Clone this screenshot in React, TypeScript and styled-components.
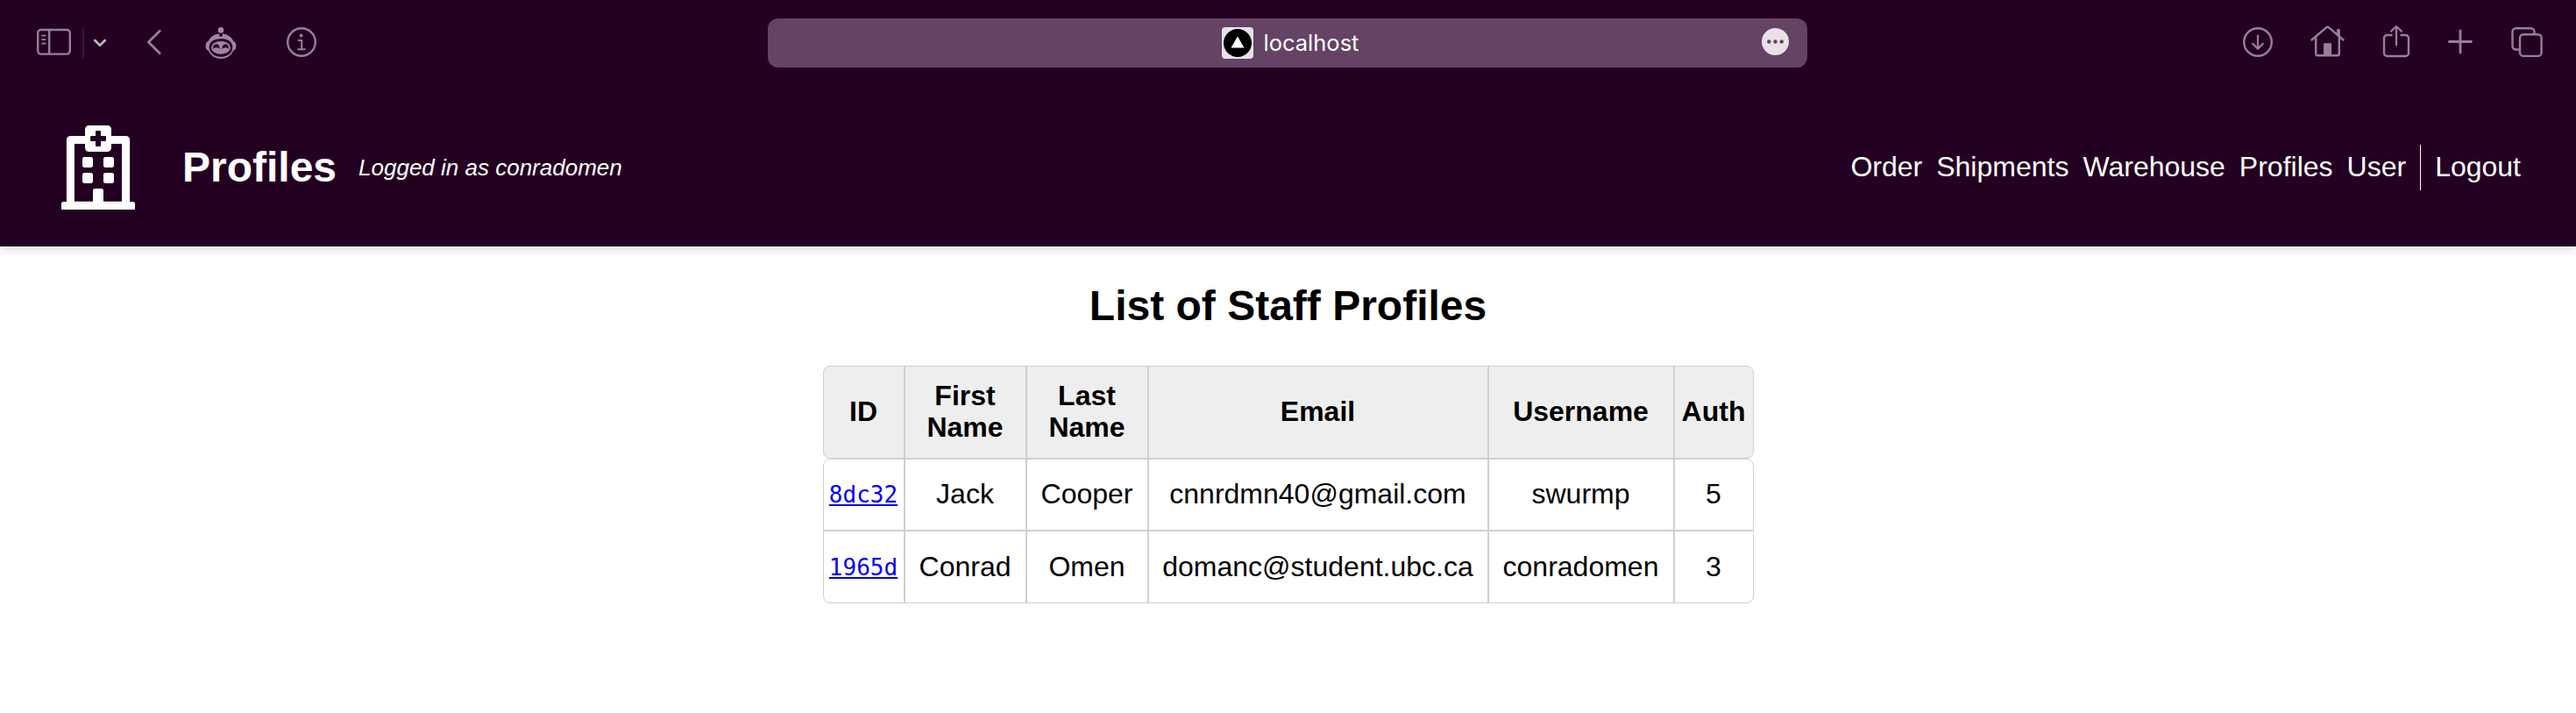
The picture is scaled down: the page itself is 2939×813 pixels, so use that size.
import React from "react";
import styled, { createGlobalStyle } from "styled-components";
import { FaRegHospital } from "react-icons/fa";

const GlobalStyle = createGlobalStyle`
  * { box-sizing: border-box; }
  body {
    margin: 0;
    background: #fff;
    color: #000;
    font-family: "Liberation Sans", Helvetica, Arial, sans-serif;
    font-size: 32px;
    line-height: 36px;
  }
`;

const Toolbar = styled.div`
  position: relative;
  z-index: 1;
  display: grid;
  grid-template-columns: 876px 1186px 1fr;
  align-items: center;
  height: 98px;
  background: #230022;
`;

const ToolGroup = styled.div<{ $end?: boolean }>`
  display: flex;
  align-items: center;
  justify-content: ${(p) => (p.$end ? "flex-end" : "flex-start")};
  padding: ${(p) => (p.$end ? "0 37px 0 0" : "0 0 0 42px")};
  color: #958095;
`;

const Glyph = styled.svg<{ $gap?: number }>`
  display: block;
  flex: none;
  height: 40px;
  margin-left: ${(p) => p.$gap ?? 0}px;
  fill: none;
  stroke: currentColor;
  stroke-width: 2.4;
  stroke-linecap: round;
  stroke-linejoin: round;
`;

const ToolDivider = styled.div`
  width: 2px;
  height: 36px;
  margin-left: 13px;
  background: #361836;
`;

const AddressBar = styled.div`
  display: grid;
  grid-template-columns: 1fr auto 1fr;
  align-items: center;
  height: 56px;
  padding-right: 21px;
  border-radius: 12px;
  background: #644364;
  color: #fff;
`;

const Site = styled.div`
  grid-column: 2;
  display: flex;
  align-items: center;
  gap: 12px;
  padding-left: 27px;
  font-family: Inter, sans-serif;
  font-size: 25.5px;
  line-height: 36px;
`;

const Favicon = styled.svg`
  display: block;
  width: 36px;
  height: 36px;
`;

const MoreButton = styled.svg`
  display: block;
  justify-self: end;
  width: 31px;
  height: 31px;
  margin-bottom: 3px;
`;

const Header = styled.header`
  display: flex;
  align-items: center;
  height: 183px;
  padding: 3px 63px 0 64px;
  background: #230022;
  color: #fff;
  box-shadow: 0 4px 10px rgba(0, 0, 0, 0.14);
`;

const Logo = styled(FaRegHospital)`
  width: 96px;
  height: 96px;
  margin-bottom: 1px;
`;

const Brand = styled.h1`
  margin: 0 0 0 48px;
  padding-bottom: 1px;
  font-size: 48px;
  line-height: 56px;
`;

const LoggedIn = styled.span`
  margin-left: 25px;
  font-size: 26px;
  font-style: italic;
`;

const Nav = styled.nav`
  display: flex;
  align-items: center;
  gap: 16px;
  margin-left: auto;
`;

const NavLink = styled.a`
  padding-bottom: 2px;
  color: inherit;
  text-decoration: none;
`;

const NavDivider = styled.div`
  width: 1px;
  height: 52px;
  background: #fff;
`;

const Main = styled.main`
  display: flex;
  flex-direction: column;
  align-items: center;
  padding-top: 40px;
`;

const Title = styled.h2`
  margin: 0 0 40px;
  font-size: 48px;
  line-height: 56px;
`;

const Table = styled.div`
  width: 1062px;
`;

const Row = styled.div<{ $head?: boolean; $height: number; $radius: string }>`
  display: grid;
  grid-template-columns: 93px 139px 139px 388px 212px 91px;
  height: ${(p) => p.$height}px;
  border-radius: ${(p) => p.$radius};
  overflow: hidden;
  border: 1px solid #d0d0d0;
  background: ${(p) => (p.$head ? "#eee" : "#fff")};
  font-weight: ${(p) => (p.$head ? 700 : 400)};
`;

const Cell = styled.div`
  display: flex;
  align-items: center;
  justify-content: center;
  margin-left: -1px;
  margin-right: 1px;
  padding-bottom: 2px;
  text-align: center;
  border-right: 1px solid #d0d0d0;
  border-left: 1px solid #d0d0d0;

  &:first-child { border-left-color: transparent; }
  &:last-child { border-right-color: transparent; }
`;

const ProfileLink = styled.a`
  padding-top: 2px;
  color: #0000ee;
  font-family: "DejaVu Sans Mono", monospace;
  font-size: 26px;
  text-decoration-thickness: 2px;
  text-underline-offset: 2px;
`;

const columns = ["ID", "First Name", "Last Name", "Email", "Username", "Auth"];
const staff = [
  { id: "8dc32", height: 82, radius: "8px 8px 0 0", rest: ["Jack", "Cooper", "cnnrdmn40@gmail.com", "swurmp", "5"] },
  { id: "1965d", height: 83, radius: "0 0 8px 8px", rest: ["Conrad", "Omen", "domanc@student.ubc.ca", "conradomen", "3"] },
];

const SidebarIcon = () => (
  <Glyph width="39" viewBox="0 0 39 40">
    <rect x="1.2" y="5" width="36.6" height="27.6" rx="3.5" />
    <path d="M14.2 5v27.6" />
    <path d="M5.8 11.6h4M5.8 16.1h4M5.8 20.6h4" strokeWidth="1.6" />
  </Glyph>
);

const RobotIcon = () => (
  <Glyph width="36" viewBox="0 0 36 40" $gap={49}>
    <g fill="#a683a6" stroke="none">
      <circle cx="18" cy="5.4" r="3.3" />
      <path
        fillRule="evenodd"
        d="M16.2 9.3v3.2h3.6V9.3c5.8.7 10.6 4.1 12.7 9 1.9.4 2.9 2.2 2.9 5.2s-1.1 4.6-3 5.1C30 34.4 24.6 38 18 38S6 34.4 3.6 28.6C1.7 28.1.6 26.4.6 23.5s1-4.8 2.9-5.2C5.6 13.4 10.4 10 16.2 9.3ZM18 15.2C9.5 15.2 4.7 18.8 4.7 24.8S9.6 35.8 18 35.8s13.3-5 13.3-11S26.500 15.2 18 15.2Z"
      />
      <ellipse cx="18" cy="25.3" rx="11" ry="7.4" />
    </g>
    <g fill="#230022" stroke="none">
      <path d="M9 27.2c-.4-8 8.2-8 7.600 0-1-2.600-6.200-2.600-7.600 0Z" />
      <path d="M19.400 27.2c-.4-8 8.200-8 7.600 0-1.400-2.600-6.600-2.600-7.600 0Z" />
    </g>
  </Glyph>
);

export default function App() {
  return (
    <>
      <GlobalStyle />
      <Toolbar>
        <ToolGroup>
          <SidebarIcon />
          <ToolDivider />
          <Glyph width="16" viewBox="0 0 16 40" $gap={10}>
            <path d="M2.2 17l5.800 5.800 5.800-5.800" stroke="#b2b5b2" strokeWidth="2.8" />
          </Glyph>
          <Glyph width="18" viewBox="0 0 18 40" $gap={45}>
            <path d="M15.300 6.200L2.400 19l12.900 12.800" strokeWidth="2.8" />
          </Glyph>
          <RobotIcon />
          <Glyph width="36" viewBox="0 0 36 40" $gap={56}>
            <circle cx="18" cy="19" r="15.8" />
            <circle cx="17.6" cy="11.5" r="1.9" fill="currentColor" stroke="none" />
            <path d="M14.700 17h3.500v10M14.300 27.200h7.600" strokeWidth="2" />
          </Glyph>
        </ToolGroup>
        <AddressBar>
          <Site>
            <Favicon viewBox="0 0 36 36">
              <rect width="36" height="36" rx="4" fill="#e8e2e8" />
              <circle cx="18" cy="18" r="16" fill="#000" />
              <path d="M18 10.500l7.500 13h-15z" fill="#fff" />
            </Favicon>
            localhost
          </Site>
          <MoreButton viewBox="0 0 31 31">
            <circle cx="15.500" cy="15.500" r="15.500" fill="#e8e2e8" />
            <g fill="#644364">
              <circle cx="8.300" cy="15.500" r="2.200" />
              <circle cx="15.500" cy="15.500" r="2.200" />
              <circle cx="22.700" cy="15.500" r="2.200" />
            </g>
          </MoreButton>
        </AddressBar>
        <ToolGroup $end>
          <Glyph width="36" viewBox="0 0 36 40">
            <circle cx="18" cy="19" r="15.8" />
            <path d="M18 11.500v15M12.200 20.800l5.800 5.800 5.800-5.800" strokeWidth="2.2" />
          </Glyph>
          <Glyph width="40" viewBox="0 0 40 40" $gap={42}>
            <path d="M1.500 16.500L18.500 2.200a1.800 1.800 0 0 1 2.200 0L37.500 16.500" />
            <path d="M6.200 13v19a2.300 2.300 0 0 0 2.300 2.300h22a2.300 2.300 0 0 0 2.300-2.300V13" />
            <path d="M31 5h2v6.500l-2-1.700z" fill="currentColor" strokeWidth="1.8" />
            <path d="M15.800 21h7.500v13h-7.500z" fill="currentColor" strokeWidth="1.5" />
          </Glyph>
          <Glyph width="32" viewBox="0 0 32 40" $gap={42}>
            <path d="M10.500 11H5.500a3.500 3.500 0 0 0-3.500 3.500v17A3.500 3.500 0 0 0 5.500 35h21a3.500 3.500 0 0 0 3.500-3.500v-17a3.500 3.500 0 0 0-3.500-3.500h-5" />
            <path d="M16 22.500V1.200M10 6.600l6-5.600 6 5.600" strokeWidth="2.2" />
          </Glyph>
          <Glyph width="30" viewBox="0 0 30 40" $gap={42}>
            <path d="M15 6v25M2.500 18.500h25" strokeWidth="2.8" />
          </Glyph>
          <Glyph width="38" viewBox="0 0 38 40" $gap={42}>
            <rect x="11" y="10.300" width="24.600" height="24.600" rx="4" />
            <path d="M10.500 27.500H6.500a4 4 0 0 1-4-4V7.200a4 4 0 0 1 4-4h17a4 4 0 0 1 4 4V10" />
          </Glyph>
        </ToolGroup>
      </Toolbar>
      <Header>
        <Logo />
        <Brand>Profiles</Brand>
        <LoggedIn>Logged in as conradomen</LoggedIn>
        <Nav>
          {["Order", "Shipments", "Warehouse", "Profiles", "User"].map((label) => (
            <NavLink key={label}>{label}</NavLink>
          ))}
          <NavDivider />
          <NavLink>Logout</NavLink>
        </Nav>
      </Header>
      <Main>
        <Title>List of Staff Profiles</Title>
        <Table>
          <Row $head $height={106} $radius="8px">
            {columns.map((name) => (
              <Cell key={name}>{name}</Cell>
            ))}
          </Row>
          {staff.map((person) => (
            <Row key={person.id} $height={person.height} $radius={person.radius}>
              <Cell>
                <ProfileLink href="#">{person.id}</ProfileLink>
              </Cell>
              {person.rest.map((value) => (
                <Cell key={value}>{value}</Cell>
              ))}
            </Row>
          ))}
        </Table>
      </Main>
    </>
  );
}
